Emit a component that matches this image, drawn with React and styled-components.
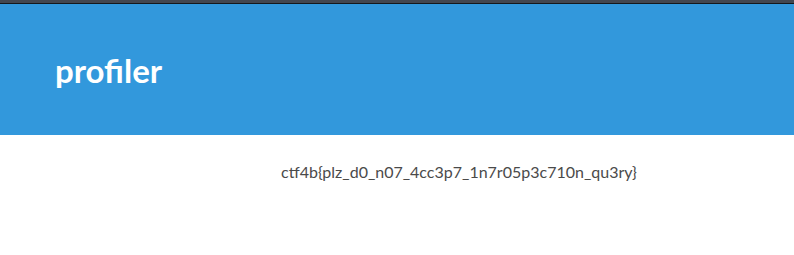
import React from 'react';
import styled, { createGlobalStyle } from 'styled-components';

const GlobalStyle = createGlobalStyle`
    html, body {
        margin: 0;
        padding: 0;
        background: #fff;
        font-family: Lato, "Noto Sans", sans-serif;
    }
`;

const TopBar = styled.div`
    height: 3px;
    background-color: #434750;
    border-bottom: 1px solid #16181c;
`;

const Hero = styled.section`
    background-color: #3298dc;
    height: 131px;
    display: flex;
    align-items: center;
    padding-left: 55px;
    box-sizing: border-box;
`;

const Title = styled.h1`
    margin: 0;
    color: #fff;
    font-size: 33px;
    font-weight: 700;
    line-height: 1;
    padding-top: 2px;
`;

const Content = styled.main`
    padding: 27px 0 0 281px;
`;

const Flag = styled.p`
    margin: 0;
    color: #4a4a4a;
    font-size: 16px;
    line-height: 20px;
`;

const App = () => {
    return (
        <>
            <GlobalStyle />
            <TopBar />
            <Hero>
                <Title>profiler</Title>
            </Hero>
            <Content>
                <Flag>ctf4b{'{'}plz_d0_n07_4cc3p7_1n7r05p3c710n_qu3ry{'}'}</Flag>
            </Content>
        </>
    );
};

export default App;
